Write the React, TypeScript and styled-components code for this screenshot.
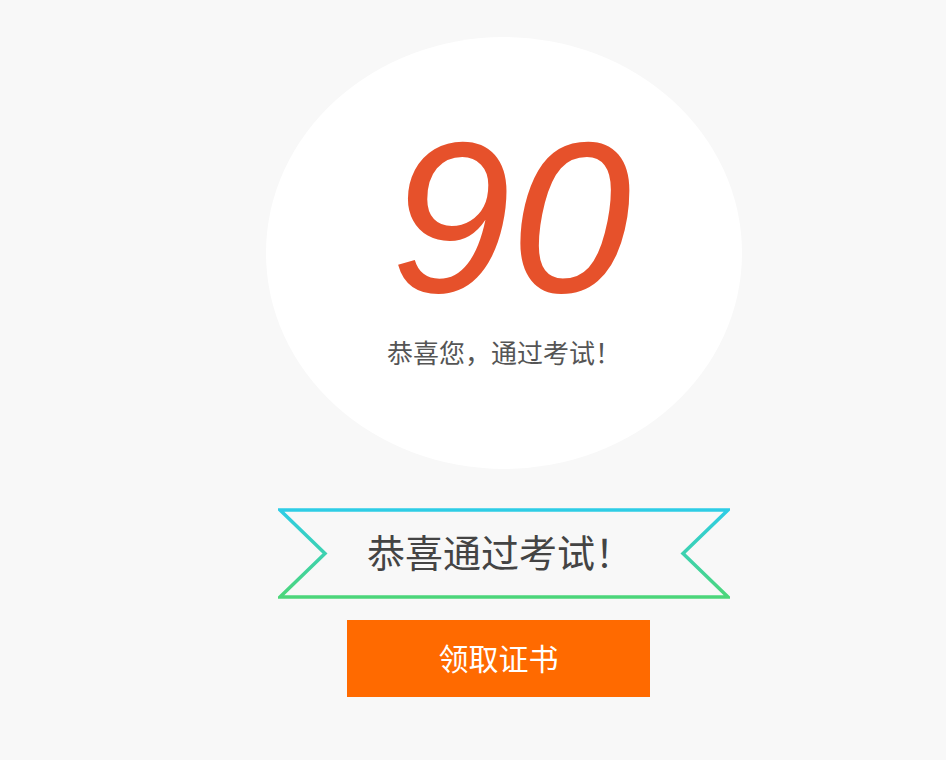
import { ReactElement } from 'react';
import styled, { createGlobalStyle } from 'styled-components';

const GlobalStyle = createGlobalStyle`
  html, body {
    margin: 0;
    padding: 0;
    background: #f8f8f8;
  }
  body {
    font-family: "Noto Sans CJK SC", "Noto Sans", sans-serif;
  }
`;

const Page = styled.div`
  display: flex;
  flex-direction: column;
  align-items: flex-start;
  padding-top: 37px;
  min-height: 723px;
`;

const ScoreCircle = styled.div`
  margin-left: 266px;
  width: 476px;
  height: 432px;
  border-radius: 50%;
  background: #ffffff;
  display: flex;
  flex-direction: column;
  align-items: center;
  padding-top: 78px;
  box-sizing: border-box;
`;

const Score = styled.div`
  font-family: "Liberation Sans", Arial, sans-serif;
  font-style: italic;
  font-size: 216px;
  line-height: 0.95;
  color: #e6512b;
  padding-left: 14px;
`;

const Message = styled.div`
  margin-top: 19px;
  font-size: 26px;
  line-height: 1;
  color: #555555;
`;

const Ribbon = styled.div`
  position: relative;
  margin-top: 39px;
  margin-left: 278px;
  width: 452px;
  height: 91px;
  display: flex;
  align-items: center;
  justify-content: center;
`;

const RibbonShape = styled.svg`
  position: absolute;
  inset: 0;
`;

const RibbonText = styled.span`
  position: relative;
  font-size: 38px;
  line-height: 1;
  color: #444444;
  padding-right: 8px;
  margin-top: -5px;
`;

const ClaimButton = styled.button`
  margin-top: 21px;
  margin-left: 347px;
  width: 303px;
  height: 77px;
  border: none;
  background: #ff6a00;
  color: #ffffff;
  font-family: "Noto Sans CJK SC", sans-serif;
  font-size: 30px;
  cursor: pointer;
  padding: 0 0 4px;
`;

const App = (): ReactElement => (
  <>
    <GlobalStyle />
    <Page>
      <ScoreCircle>
        <Score>90</Score>
        <Message>恭喜您，通过考试！</Message>
      </ScoreCircle>
      <Ribbon>
        <RibbonShape width="452" height="91" viewBox="0 0 452 91">
          <defs>
            <linearGradient id="ribbonStroke" x1="0" y1="0" x2="0" y2="1">
              <stop offset="0" stopColor="#2ecde6" />
              <stop offset="1" stopColor="#4cd67a" />
            </linearGradient>
          </defs>
          <polygon
            points="2,2 450,2 405,45.5 450,89 2,89 47,45.5"
            fill="none"
            stroke="url(#ribbonStroke)"
            strokeWidth="3.5"
          />
        </RibbonShape>
        <RibbonText>恭喜通过考试！</RibbonText>
      </Ribbon>
      <ClaimButton>领取证书</ClaimButton>
    </Page>
  </>
);

export default App;
